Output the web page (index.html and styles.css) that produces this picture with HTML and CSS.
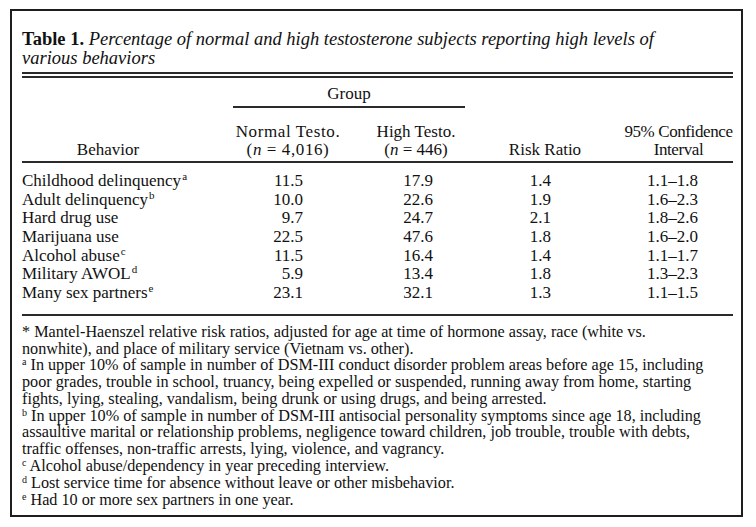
FILE: index.html
```html
<!DOCTYPE html>
<html>
<head>
<meta charset="utf-8">
<link rel="stylesheet" href="styles.css">
</head>
<body>
<div class="frame">
  <div class="title"><b>Table 1.</b> <i>Percentage of normal and high testosterone subjects reporting high levels of<br>various behaviors</i></div>
  <div class="double-rule"></div>

  <div class="group-row">
    <div class="group">
      <div class="group-label">Group</div>
      <div class="group-rule"></div>
    </div>
  </div>
  <div class="row head">
    <div class="c1 hb">Behavior</div>
    <div class="c2 hc wide">Normal Testo.<br>(<i>n</i> = 4,016)</div>
    <div class="c3 hc">High Testo.<br>(<i>n</i> = 446)</div>
    <div class="c4 hc">Risk Ratio</div>
    <div class="c5 hc tight">95% Confidence<br>Interval</div>
  </div>
  <div class="rule"></div>

  <div class="body">
    <div class="row"><div class="c1">Childhood delinquency<sup>a</sup></div><div class="c2 n">11.5</div><div class="c3 n">17.9</div><div class="c4 n">1.4</div><div class="c5 n">1.1–1.8</div></div>
    <div class="row"><div class="c1">Adult delinquency<sup>b</sup></div><div class="c2 n">10.0</div><div class="c3 n">22.6</div><div class="c4 n">1.9</div><div class="c5 n">1.6–2.3</div></div>
    <div class="row"><div class="c1">Hard drug use</div><div class="c2 n">9.7</div><div class="c3 n">24.7</div><div class="c4 n">2.1</div><div class="c5 n">1.8–2.6</div></div>
    <div class="row"><div class="c1">Marijuana use</div><div class="c2 n">22.5</div><div class="c3 n">47.6</div><div class="c4 n">1.8</div><div class="c5 n">1.6–2.0</div></div>
    <div class="row"><div class="c1">Alcohol abuse<sup>c</sup></div><div class="c2 n">11.5</div><div class="c3 n">16.4</div><div class="c4 n">1.4</div><div class="c5 n">1.1–1.7</div></div>
    <div class="row"><div class="c1">Military AWOL<sup>d</sup></div><div class="c2 n">5.9</div><div class="c3 n">13.4</div><div class="c4 n">1.8</div><div class="c5 n">1.3–2.3</div></div>
    <div class="row"><div class="c1">Many sex partners<sup>e</sup></div><div class="c2 n">23.1</div><div class="c3 n">32.1</div><div class="c4 n">1.3</div><div class="c5 n">1.1–1.5</div></div>
  </div>
  <div class="rule"></div>

  <div class="notes">
    <p>* Mantel-Haenszel relative risk ratios, adjusted for age at time of hormone assay, race (white vs.<br>nonwhite), and place of military service (Vietnam vs. other).</p>
    <p><sup>a</sup> In upper 10% of sample in number of DSM-III conduct disorder problem areas before age 15, including<br>poor grades, trouble in school, truancy, being expelled or suspended, running away from home, starting<br>fights, lying, stealing, vandalism, being drunk or using drugs, and being arrested.</p>
    <p><sup>b</sup> In upper 10% of sample in number of DSM-III antisocial personality symptoms since age 18, including<br>assaultive marital or relationship problems, negligence toward children, job trouble, trouble with debts,<br>traffic offenses, non-traffic arrests, lying, violence, and vagrancy.</p>
    <p><sup>c</sup> Alcohol abuse/dependency in year preceding interview.</p>
    <p><sup>d</sup> Lost service time for absence without leave or other misbehavior.</p>
    <p><sup>e</sup> Had 10 or more sex partners in one year.</p>
  </div>
</div>
</body>
</html>
```

FILE: styles.css
```css
html, body {
  margin: 0;
  padding: 0;
  background: #ffffff;
}

body {
  font-family: "Liberation Serif", "Times New Roman", serif;
  color: #111111;
}

.frame {
  box-sizing: border-box;
  width: 733px;
  height: 508px;
  margin: 9px 0 0 10px;
  border: 2px solid #1e1e1e;
  padding: 19px 8px 0 10px;
}

.title {
  font-size: 18.5px;
  line-height: 19px;
  white-space: nowrap;
}

.title b {
  font-weight: bold;
}

.double-rule {
  height: 2px;
  border-top: 2px solid #2a2a2a;
  border-bottom: 2px solid #2a2a2a;
  margin-top: 4px;
}

.group-row {
  padding-left: 211px;
  padding-top: 6px;
}

.group {
  width: 232px;
}

.group-label {
  font-size: 17px;
  line-height: 19px;
  text-align: center;
}

.group-rule {
  height: 0;
  border-top: 2px solid #2a2a2a;
  margin-top: 3px;
}

.row {
  display: grid;
  grid-template-columns: 211px 110px 146px 118px 126px;
  font-size: 17px;
  line-height: 18.67px;
  white-space: nowrap;
}

.head {
  margin-top: 15px;
  line-height: 18px;
  align-items: end;
}

.hb {
  text-align: center;
  padding-right: 39px;
}

.hc {
  text-align: center;
}

.wide {
  letter-spacing: 0.6px;
}

.tight {
  letter-spacing: -0.4px;
}

.head .c4 {
  padding-right: 6px;
}

.head .c5 {
  padding-left: 17px;
}

.rule {
  height: 0;
  border-top: 2px solid #2a2a2a;
  margin-top: 2px;
}

.body {
  padding: 9px 0 9px;
}

.n {
  text-align: right;
}

.c2.n { padding-right: 40px; }
.c3.n { padding-right: 56px; }
.c4.n { padding-right: 56px; }
.c5.n { padding-right: 35px; }

sup {
  font-size: 11px;
  line-height: 0;
  vertical-align: 6px;
  margin-left: 1px;
}

.notes {
  padding-top: 8px;
  font-size: 16.2px;
  line-height: 16.8px;
  white-space: nowrap;
}

.notes p {
  margin: 0;
}

.notes sup {
  font-size: 10px;
  vertical-align: 5px;
  margin-left: 0;
}
```
